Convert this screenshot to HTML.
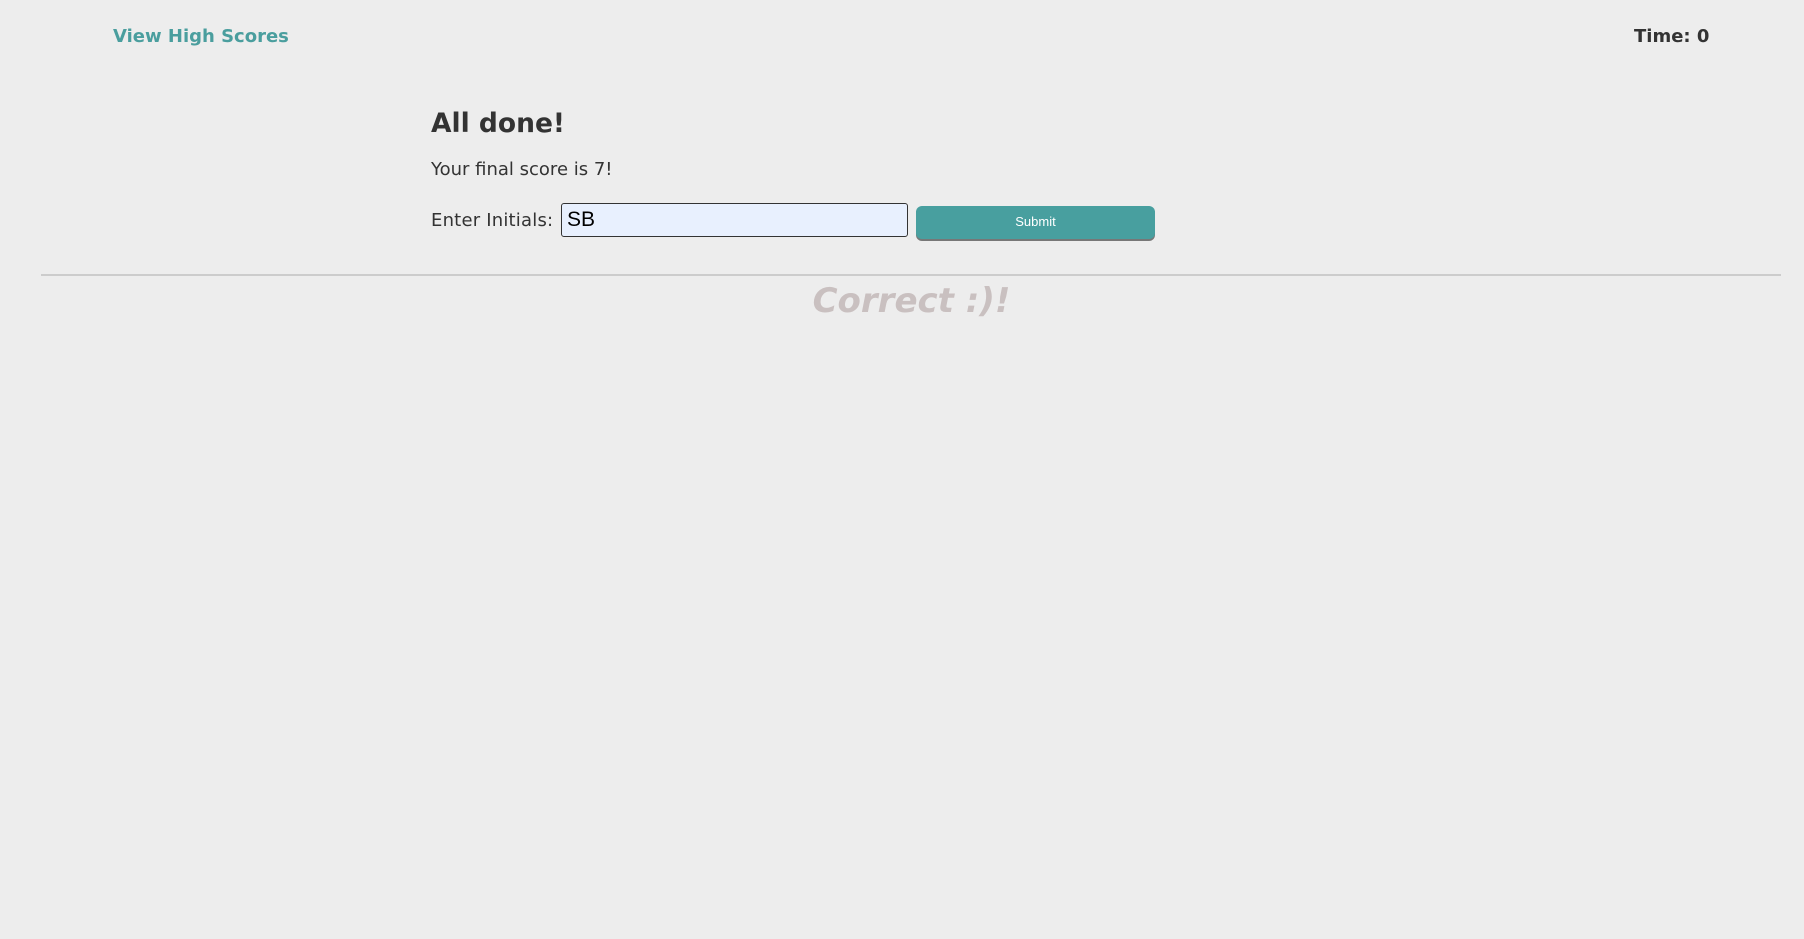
<!DOCTYPE html>
<html><head><meta charset="utf-8"><style>
html,body{margin:0;padding:0;background:#ededed;width:1804px;height:939px;overflow:hidden;font-family:"DejaVu Sans",sans-serif;color:#333}
.a{position:absolute;white-space:nowrap}
</style></head><body>
<div class="a" style="left:113px;top:26px;font-size:18px;font-weight:bold;color:#4a9e9e">View High Scores</div>
<div class="a" style="left:1634px;top:26px;font-size:18px;font-weight:bold;color:#333">Time: 0</div>
<div class="a" style="left:431px;top:108px;font-size:26.5px;font-weight:bold;color:#333">All done!</div>
<div class="a" style="left:431px;top:159px;font-size:18px;color:#333">Your final score is 7!</div>
<div class="a" style="left:431px;top:210px;font-size:18px;color:#333;letter-spacing:0.2px">Enter Initials:</div>
<div class="a" style="left:561px;top:203px;border:1px solid #333;border-radius:3px;background:#e8f0fe;font-family:'Liberation Sans',sans-serif;font-size:21px;line-height:32px;padding-left:5px;box-sizing:border-box;width:347px;height:34px;color:#000">SB</div>
<div class="a" style="left:916px;top:206px;width:239px;height:33px;border-radius:6px;background:#489f9f;box-shadow:0 2px 0 #777;color:#fff;font-family:'Liberation Sans',sans-serif;font-size:13px;text-align:center;line-height:31px">Submit</div>
<div class="a" style="left:41px;top:274px;width:1740px;height:2px;background:#ccc"></div>
<div class="a" style="left:0;width:1823px;text-align:center;top:281px;font-size:34px;font-weight:bold;font-style:italic;color:#c9c0c0">Correct :)!</div>
</body></html>
